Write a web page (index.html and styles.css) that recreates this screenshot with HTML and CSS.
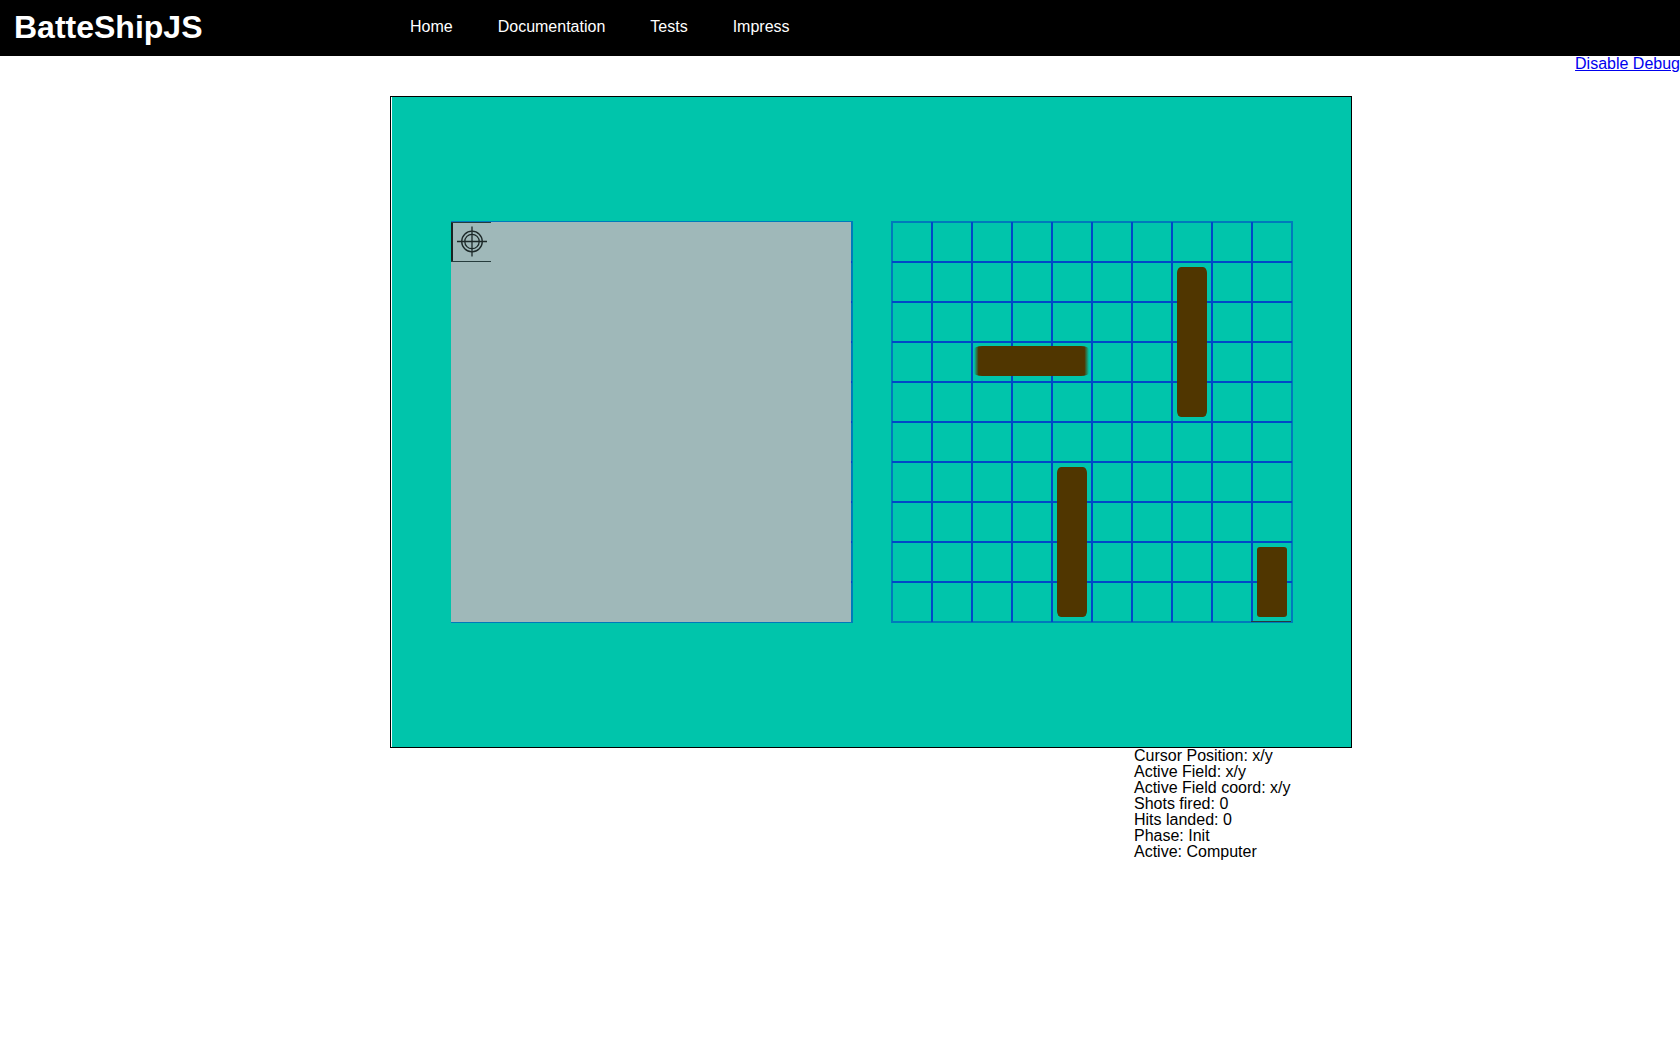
FILE: index.html
```html
<!DOCTYPE html>
<html lang="en">
<head>
<meta charset="utf-8">
<title>BatteShipJS</title>
<link rel="stylesheet" href="styles.css">
</head>
<body>
<header class="site-header">
  <h1 class="brand">BatteShipJS</h1>
  <nav class="site-nav">
    <a href="#home">Home</a>
    <a href="#documentation">Documentation</a>
    <a href="#tests">Tests</a>
    <a href="#impress">Impress</a>
  </nav>
</header>
<div class="tools"><a class="debug-link" href="#debug">Disable Debug</a></div>
<main class="game">
  <svg class="board" viewBox="0 0 960 650" role="img" aria-label="Game board">
    <defs>
      <linearGradient id="hull">
        <stop offset="0" stop-color="#503600" stop-opacity="0"/>
        <stop offset=".04" stop-color="#503600"/>
        <stop offset=".96" stop-color="#503600"/>
        <stop offset="1" stop-color="#503600" stop-opacity="0"/>
      </linearGradient>
    </defs>
    <rect class="sea" x="1" width="959" height="650"/>
    <!-- opponent field, covered by fog -->
    <rect class="frame" x="61" y="125" width="400" height="400"/>
    <path class="ticks" d="M460 165h1M460 205h1M460 245h1M460 285h1M460 325h1M460 365h1M460 405h1M460 445h1M460 485h1"/>
    <rect class="fog" x="60" y="125" width="400" height="400"/>
    <path class="edge" d="M60 125h2v40h-2z"/>
    <path class="hair" d="M60 125.5h40M60 164.5h40"/>
    <g class="aim">
      <circle cx="81" cy="144.500" r="10.300"/>
      <circle cx="81" cy="144.500" r="7.200"/>
      <path d="M66 144.500h30M81 129.500v30"/>
    </g>
    <!-- own field -->
    <rect class="frame" x="501" y="125" width="400" height="400"/>
    <path class="lines" d="M541 125v400M581 125v400M621 125v400M661 125v400M701 125v400M741 125v400M781 125v400M821 125v400M861 125v400M501 165h400M501 205h400M501 245h400M501 285h400M501 325h400M501 365h400M501 405h400M501 445h400M501 485h400"/>
    <path class="hair" d="M860 524.500h40"/>
    <rect class="ship" x="786" y="170" width="30" height="150" rx="4" ry="6"/>
    <rect x="583" y="249" width="115" height="30" rx="8" ry="3" fill="url(#hull)"/>
    <rect class="ship" x="666" y="370" width="30" height="150" rx="4" ry="6"/>
    <rect class="ship" x="866" y="450" width="30" height="70" rx="3"/>
  </svg>
  <ul class="stats">
    <li>Cursor Position: x/y</li>
    <li>Active Field: x/y</li>
    <li>Active Field coord: x/y</li>
    <li>Shots fired: 0</li>
    <li>Hits landed: 0</li>
    <li>Phase: Init</li>
    <li>Active: Computer</li>
  </ul>
</main>
</body>
</html>
```
FILE: styles.css
```css
* { box-sizing: border-box; }
body {
  margin: 0;
  background: #fff;
  color: #000;
  font: 16px/16px "Liberation Sans", Arial, sans-serif;
}
.site-header {
  display: grid;
  grid-template-columns: 410px 1fr;
  align-items: center;
  height: 56px;
  padding-bottom: 2px;
  background: #000;
  color: #fff;
}
.brand {
  margin: 0;
  padding-left: 14px;
  font-size: 32px;
  line-height: 36px;
}
.site-nav { display: flex; gap: 45px; }
.site-nav a { color: #fff; text-decoration: none; }
.tools { display: flex; justify-content: flex-end; }
.debug-link { color: #00e; }
.game {
  display: flex;
  flex-direction: column;
  max-width: 1352px;
  margin-top: 24px;
  padding-left: 390px;
}
.board {
  display: block;
  width: 100%;
  border: 1px solid #000;
}
.stats {
  align-self: flex-end;
  width: 218px;
  margin: 0;
  padding: 0;
  list-style: none;
}
.sea { fill: #00c5ab; }
.fog { fill: #9fb8b9; }
.ship { fill: #503600; }
.edge { fill: #182424; }
.frame { fill: none; stroke: #007abb; stroke-width: 2; }
.lines, .ticks { fill: none; stroke: #0048c8; stroke-width: 2; }
.hair { fill: none; stroke: #263c3c; stroke-width: 1; }
.aim { fill: none; stroke: #1c2828; stroke-width: 1.3; }
```
